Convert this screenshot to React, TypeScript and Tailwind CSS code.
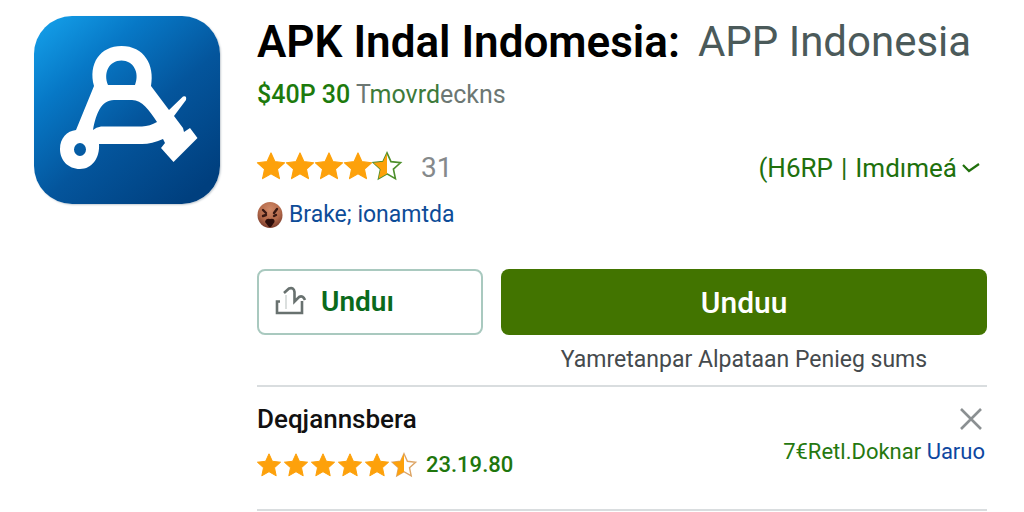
import { useState } from "react";

const STAR =
  "M12 0.8 L15.4 8.3 L23.6 9.2 L17.5 14.7 L19.2 22.8 L12 18.7 L4.8 22.8 L6.5 14.7 L0.4 9.2 L8.6 8.3 Z";
const HALF_STAR = "M12 0.8 L12 18.7 L4.8 22.8 L6.5 14.7 L0.4 9.2 L8.6 8.3 Z";

function Star({ className }: { className: string }) {
  return (
    <svg viewBox="0 0 24 24" className={className} overflow="visible" aria-hidden="true">
      <path d={STAR} fill="#fda10b" stroke="#fda10b" strokeWidth="1" strokeLinejoin="round" />
    </svg>
  );
}

function HalfStar({ className, outline }: { className: string; outline: string }) {
  return (
    <svg viewBox="0 0 24 24" className={className} overflow="visible" aria-hidden="true">
      <path d={STAR} fill="#fff" stroke={outline} strokeWidth="1.4" />
      <path d={HALF_STAR} fill="#fda10b" />
    </svg>
  );
}

function AppLogo() {
  return (
    <svg
      viewBox="0 0 186 188"
      className="w-[186px] h-[188px] shrink-0 rounded-[38px] shadow-[1px_1px_2px_#c5ccd2]"
      role="img"
      aria-label="APK Indal"
    >
      <defs>
        <linearGradient id="sky" x1="0" y1="0.05" x2="0.8" y2="1">
          <stop offset="0" stopColor="#149fe9" />
          <stop offset="0.28" stopColor="#0778c6" />
          <stop offset="0.6" stopColor="#04559c" />
          <stop offset="1" stopColor="#003f7e" />
        </linearGradient>
      </defs>
      <rect width="186" height="188" fill="url(#sky)" />
      <path
        fill="#fff"
        fillRule="evenodd"
        d="M60 70 C54 48 66 30 87.5 30 C110 30 121 49 117 70 L135 94 L149 80.500 Q153 79 152 84 L140 100 L149 112 L150 116 L156 112 L163.500 122 L139.500 146 L127 132 L131 127 L129 123 Q118 128 108 128 L65 128 C66 142 58 153 46 153 C34 153 26 144 26 133 C26 122 33 115 42 114 Z
        M74 69 L101 69 C106 56 99 44.500 87.500 44.500 C75 44.500 69 57 74 69 Z
        M59 114 C62 98 67 84 80 84 L98 84 C108 84 115 94 123 106 Q116 110 108 110.500 L67 110.500 Q62 111 59 114 Z
        M46 127 A6 6.500 0 1 0 46 140 A6 6.500 0 1 0 46 127 Z"
      />
    </svg>
  );
}

function Face() {
  return (
    <svg viewBox="0 0 26 28" className="w-[26px] h-7 shrink-0" aria-hidden="true">
      <defs>
        <radialGradient id="skin" cx="0.5" cy="0.3" r="0.7">
          <stop offset="0" stopColor="#d18a68" />
          <stop offset="0.6" stopColor="#b3694a" />
          <stop offset="1" stopColor="#793b2b" />
        </radialGradient>
      </defs>
      <ellipse cx="13" cy="14" rx="12.500" ry="13" fill="url(#skin)" />
      <path
        d="M6 9 L9 12 M6 15 L9 14 M20 8 L17 12 M17 15 L19 14"
        stroke="#391812"
        strokeWidth="2.400"
        strokeLinecap="round"
      />
      <path d="M8 21 Q9 17 13 18 Q18 17 17.500 21 L14 26 L12 26 Z" fill="#2c0d0a" />
    </svg>
  );
}

function ShareIcon() {
  return (
    <svg
      viewBox="0 0 32 32"
      className="w-8 h-8 shrink-0"
      fill="none"
      stroke="#68716f"
      strokeWidth="2.600"
      aria-hidden="true"
    >
      <path d="M5 15.500 H2 V27 H27 V15" />
      <path d="M9 7 L14 2.500 Q19 1 19.500 6 V15.500 L24 11 Q28 9 30 14" />
      <path d="M11 9 V23" stroke="#cfd4d3" strokeWidth="1.500" />
    </svg>
  );
}

export default function App() {
  const [open, setOpen] = useState(true);

  return (
    <main className="flex gap-[37px] bg-white pt-4 pl-[34px] pr-[37px] font-[Roboto,sans-serif]">
      <AppLogo />

      <div className="flex-1 min-w-0 whitespace-nowrap">
        <h1 className="flex gap-[18px] text-[44px] leading-[52px] font-semibold text-black">
          APK Indal Indomesia:
          <span className="text-[42px] font-normal text-[#4b5a5a]">APP Indonesia</span>
        </h1>

        <p className="mt-[11px] text-[25px] leading-8 text-[#6c7773]">
          <span className="font-medium text-[#1d7a0c]">$40P 30</span> T
          <span className="text-[#3d7a3a]">movrd</span>eckns
        </p>

        <div className="mt-[39px] flex h-8 items-center justify-between">
          <div className="flex items-center">
            <div className="flex gap-px" role="img" aria-label="4.5 / 5">
              <Star className="w-7 h-7" />
              <Star className="w-7 h-7" />
              <Star className="w-7 h-7" />
              <Star className="w-7 h-7" />
              <HalfStar className="w-7 h-7" outline="#4d8f2c" />
            </div>
            <span className="ml-5 mt-1 text-[28px] leading-8 text-[#85898b]">31</span>
          </div>
          <button className="mt-1 mr-1.5 flex items-center gap-1 text-[26px] leading-8 text-[#20700c]">
            <span className="mr-1">(H6RP</span>
            <span className="mr-1">|</span>
            <span>Imdımeá</span>
            <svg viewBox="0 0 20 12" className="w-5 h-3" fill="none" aria-hidden="true">
              <path d="M2 3 L8 9 L18 2" stroke="#20700c" strokeWidth="2.200" />
            </svg>
          </button>
        </div>

        <a
          href="#"
          className="mt-[17px] flex h-8 items-center gap-1.5 text-[23px] leading-8 text-[#0d4c98]"
        >
          <Face />
          Brake; ionamtda
        </a>

        <div className="mt-[38px] flex gap-[18px]">
          <button className="flex h-[66px] w-[31%] items-center gap-3.5 rounded-lg border-2 border-[#a9c9bf] pl-4 text-[28px] font-semibold text-[#0b6a1c]">
            <ShareIcon />
            Unduı
          </button>
          <button className="h-[66px] flex-1 rounded-lg bg-[#427400] text-[30px] font-medium text-white">
            Unduu
          </button>
        </div>

        <p className="mt-[9px] text-center text-[23px] leading-8 text-[#454a4d] pl-[244px]">
          Yamretanpar Alpataan Penieg sums
        </p>

        {open && (
          <section className="mt-[9px] flex justify-between border-y-2 border-[#d9dddf] pt-4 pb-7">
            <div className="flex flex-col gap-3.5">
              <h2 className="text-[26px] leading-8 font-medium text-[#111]">Deqjannsbera</h2>
              <div className="flex items-center">
                <div className="flex gap-[3px]" role="img" aria-label="5.5">
                  <Star className="w-6 h-[26px]" />
                  <Star className="w-6 h-[26px]" />
                  <Star className="w-6 h-[26px]" />
                  <Star className="w-6 h-[26px]" />
                  <Star className="w-6 h-[26px]" />
                  <HalfStar className="w-6 h-[26px]" outline="#dda566" />
                </div>
                <span className="ml-2.5 text-[22px] leading-8 font-medium text-[#20760c]">
                  23.19.80
                </span>
              </div>
            </div>

            <div className="flex flex-col items-end gap-px">
              <button
                className="flex h-8 items-center pr-1"
                aria-label="Tutup"
                onClick={() => setOpen(false)}
              >
                <svg viewBox="0 0 24 24" className="w-6 h-6" aria-hidden="true">
                  <path d="M2 2 L22 22 M22 2 L2 22" stroke="#8b9092" strokeWidth="2.600" />
                </svg>
              </button>
              <p className="pr-0.5 text-[22px] leading-8 text-[#25780f]">
                7€Retl.Doknar{" "}
                <a href="#" className="text-[#0d47a1]">
                  Uaruo
                </a>
              </p>
            </div>
          </section>
        )}
      </div>
    </main>
  );
}
